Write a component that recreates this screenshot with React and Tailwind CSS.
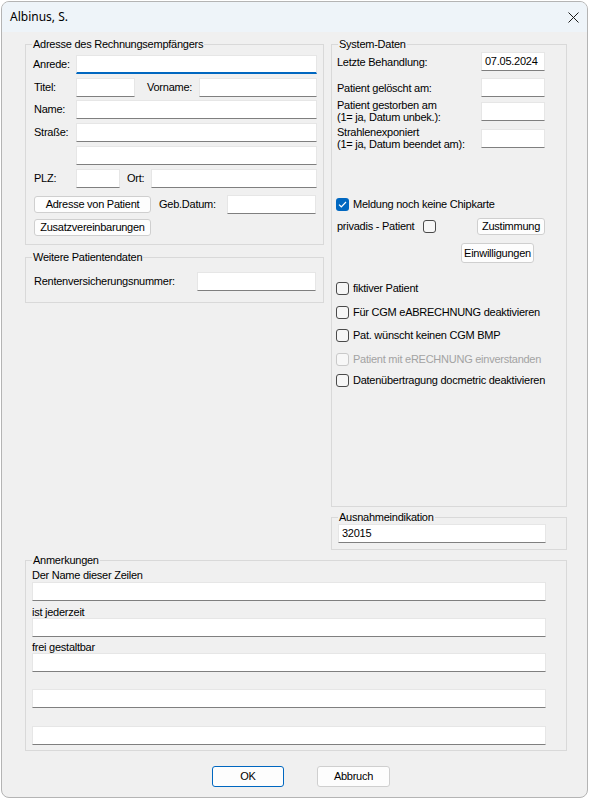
import React from "react";

// kleine Bausteine im Stil eines Win32-Dialogs
function Field({ className = "", value = "", focused = false }) {
  return (
    <div
      className={
        "h-[19px] shrink-0 bg-white border border-[#e6e6e6] flex items-center px-[3px] " +
        (focused ? "border-b-2 border-b-[#0067c0] " : "border-b-[#7f7f7f] ") +
        className
      }
    >
      {value}
    </div>
  );
}

function Btn({ children, className = "", def = false }) {
  return (
    <div
      className={
        "shrink-0 flex items-center justify-center whitespace-nowrap rounded-[3px] border bg-[#fdfdfd] " +
        (def ? "border-[#0067c0] " : "border-[#cfcfcf] ") +
        className
      }
    >
      {children}
    </div>
  );
}

function Check({ checked = false, disabled = false }) {
  if (checked) {
    return (
      <span className="w-[13px] h-[13px] shrink-0 rounded-[3px] bg-[#0067c0] flex items-center justify-center">
        <svg width="9" height="7" viewBox="0 0 9 7" fill="none">
          <path d="M1 3.6 L3.3 5.8 L8 1" stroke="white" strokeWidth="1.2" />
        </svg>
      </span>
    );
  }
  return (
    <span
      className={
        "w-[13px] h-[13px] shrink-0 rounded-[3px] border " +
        (disabled ? "border-[#c9c9c9] bg-[#f7f7f7]" : "border-[#4a4a4a] bg-[#f6f6f6]")
      }
    />
  );
}

function Group({ title, className = "", children }) {
  return (
    <fieldset className={"min-w-0 border border-[#d9d9d9] " + className}>
      <legend className="ml-[6px] px-[1px] leading-[13px]">{title}</legend>
      {children}
    </fieldset>
  );
}

function CheckRow({ label, checked, disabled, className = "" }) {
  return (
    <div className={"flex items-center gap-[4px] h-[13px] whitespace-nowrap " + className}>
      <Check checked={checked} disabled={disabled} />
      <span className={disabled ? "text-[#a3a3a3]" : ""}>{label}</span>
    </div>
  );
}

export default function App() {
  return (
    <div className="w-[589px] h-[799px] bg-white p-px font-['Liberation_Sans',Arial,sans-serif] text-[11px] tracking-[-0.25px] text-black">
      <div className="w-[587px] h-[797px] rounded-[8px] border border-[#b4b4b4] overflow-hidden flex flex-col bg-[#f0f0f0]">
        {/* Titelleiste */}
        <div className="h-[30px] shrink-0 bg-[#eef4f9] flex items-center justify-between pl-[8px] pr-[8px]">
          <span className="text-[12px] tracking-normal font-['Noto_Sans','Open_Sans',sans-serif]">Albinus, S.</span>
          <svg width="11" height="11" viewBox="0 0 11 11">
            <path d="M0.5 0.5 L10.5 10.5 M10.5 0.5 L0.5 10.5" stroke="#1a1a1a" strokeWidth="1" />
          </svg>
        </div>

        <div className="flex-1 pl-[23px] pt-[6px] leading-[13px]">
          <div className="flex gap-[7px]">
            {/* linke Spalte */}
            <div className="w-[299px] shrink-0">
              <Group title="Adresse des Rechnungsempfängers" className="w-full">
                <div className="pl-[7px] pr-[6px] pt-[4px] pb-[8px]">
                  <div className="flex items-center">
                    <span className="w-[43px]">Anrede:</span>
                    <Field focused className="w-[241px]" />
                  </div>
                  <div className="flex items-center mt-[4px]">
                    <span className="w-[43px] pl-px">Titel:</span>
                    <Field className="w-[59px]" />
                    <span className="w-[52px] pl-[12px] box-content">Vorname:</span>
                    <Field className="w-[118px]" />
                  </div>
                  <div className="flex items-center mt-[3px]">
                    <span className="w-[43px] pl-px">Name:</span>
                    <Field className="w-[241px]" />
                  </div>
                  <div className="flex items-center mt-[4px]">
                    <span className="w-[43px] pl-px">Straße:</span>
                    <Field className="w-[241px]" />
                  </div>
                  <div className="flex items-center mt-[4px] pl-[43px]">
                    <Field className="w-[241px]" />
                  </div>
                  <div className="flex items-center mt-[4px]">
                    <span className="w-[43px] pl-px">PLZ:</span>
                    <Field className="w-[44px]" />
                    <span className="w-[24px] pl-[7px] box-content">Ort:</span>
                    <Field className="w-[166px]" />
                  </div>
                  <div className="flex items-center mt-[7px] pl-px">
                    <Btn className="w-[117px] h-[17px]">Adresse von Patient</Btn>
                    <span className="w-[68px] pl-[8px] box-content">Geb.Datum:</span>
                    <Field className="w-[89px]" />
                  </div>
                  <div className="flex mt-[5px] pl-px">
                    <Btn className="w-[117px] h-[17px]">Zusatzvereinbarungen</Btn>
                  </div>
                </div>
              </Group>

              <Group title="Weitere Patientendaten" className="w-full mt-[6px]">
                <div className="pl-[8px] pr-[7px] pt-[8px] pb-[11px] flex items-center justify-between">
                  <span>Rentenversicherungsnummer:</span>
                  <Field className="w-[119px]" />
                </div>
              </Group>
            </div>

            {/* rechte Spalte */}
            <div className="w-[236px] shrink-0">
              <Group title="System-Daten" className="w-full h-[469px]">
                <div className="pl-[5px] pr-[21px] pt-[1px]">
                  <div className="flex items-center justify-between">
                    <span className="pt-[2px]">Letzte Behandlung:</span>
                    <Field className="w-[64px]" value="07.05.2024" />
                  </div>
                  <div className="flex items-center justify-between mt-[7px]">
                    <span className="pt-[2px]">Patient gelöscht am:</span>
                    <Field className="w-[64px]" />
                  </div>
                  <div className="flex items-center justify-between mt-[2px]">
                    <span className="leading-[12px]">
                      Patient gestorben am
                      <br />
                      (1= ja, Datum unbek.):
                    </span>
                    <Field className="w-[64px]" />
                  </div>
                  <div className="flex items-center justify-between mt-[3px]">
                    <span className="leading-[12px]">
                      Strahlenexponiert
                      <br />
                      (1= ja, Datum beendet am):
                    </span>
                    <Field className="w-[64px]" />
                  </div>

                  <CheckRow className="mt-[48px] -ml-px" checked label="Meldung noch keine Chipkarte" />

                  <div className="flex items-center h-[17px] mt-[7px]">
                    <span className="w-[88px]">privadis - Patient</span>
                    <Check />
                    <Btn className="ml-[41px] w-[68px] h-[17px]">Zustimmung</Btn>
                  </div>
                  <div className="flex mt-[8px] pl-[124px]">
                    <Btn className="w-[73px] h-[20px]">Einwilligungen</Btn>
                  </div>

                  <div className="-ml-px">
                    <CheckRow className="mt-[19px]" label="fiktiver Patient" />
                    <CheckRow className="mt-[11px]" label="Für CGM eABRECHNUNG deaktivieren" />
                    <CheckRow className="mt-[10px]" label="Pat. wünscht keinen CGM BMP" />
                    <CheckRow className="mt-[11px]" disabled label="Patient mit eRECHNUNG einverstanden" />
                    <CheckRow className="mt-[8px]" label="Datenübertragung docmetric deaktivieren" />
                  </div>
                </div>
              </Group>

              <Group title="Ausnahmeindikation" className="w-full mt-[4px]">
                <div className="pl-[6px] pb-[6px]">
                  <Field className="w-[208px]" value="32015" />
                </div>
              </Group>
            </div>
          </div>

          <Group title="Anmerkungen" className="mt-[4px] w-[542px]">
            <div className="pl-[6px] pb-[5px]">
              <div className="mt-[2px] leading-[12px]">Der Name dieser Zeilen</div>
              <Field className="w-[514px] mt-[1px]" />
              <div className="mt-[5px] leading-[12px]">ist jederzeit</div>
              <Field className="w-[514px]" />
              <div className="mt-[4px] leading-[12px]">frei gestaltbar</div>
              <Field className="w-[514px]" />
              <Field className="w-[514px] mt-[17px]" />
              <Field className="w-[514px] mt-[18px]" />
            </div>
          </Group>

          <div className="flex pl-[187px] gap-[33px] mt-[15px]">
            <Btn def className="w-[72px] h-[21px]">OK</Btn>
            <Btn className="w-[73px] h-[21px]">Abbruch</Btn>
          </div>
        </div>
      </div>
    </div>
  );
}
